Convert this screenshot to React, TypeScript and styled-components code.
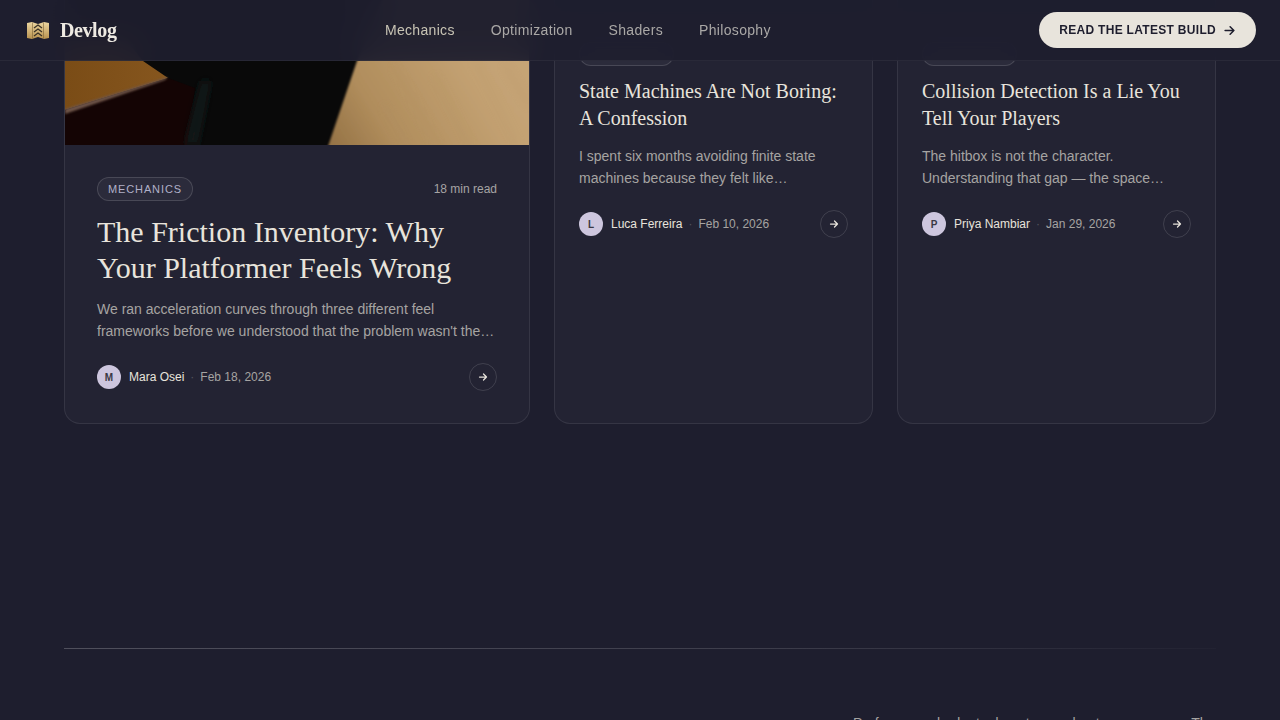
import React from "react";
import styled, { createGlobalStyle } from "styled-components";

const Global = createGlobalStyle`
  html, body { margin: 0; padding: 0; height: 720px; overflow: hidden; background: #1e1e2e; }
  * { box-sizing: border-box; }
`;
const Page = styled.div`
  height: 720px; overflow: hidden; position: relative; background: #1e1e2e;
  font-family: "Liberation Sans", Arial, sans-serif;
`;
const Header = styled.header`
  position: absolute; top: 0; left: 0; right: 0; z-index: 5; height: 61px;
  display: flex; justify-content: space-between; align-items: center; padding: 0 24px;
  background: rgba(30,30,46,.93); backdrop-filter: blur(14px);
  border-bottom: 1px solid rgba(255,255,255,.05);
`;
const Brand = styled.div`display: flex; align-items: center; gap: 11px; padding-left: 3px;`;
const BrandName = styled.span`
  font-family: "Liberation Serif", serif; font-weight: 700; font-size: 20px; letter-spacing: -.4px; color: #eeeae2;
`;
const Nav = styled.nav`display: flex; gap: 36px;`;
const NavLink = styled.a<{ $active?: boolean }>`
  font-size: 14px; letter-spacing: .33px; color: ${p => (p.$active ? "#c8c4b4" : "#aaa8a6")};
`;
const Cta = styled.button`
  height: 36px; padding: 0 19px 0 20px; border: 0; border-radius: 18px; background: #e8e4dc; color: #1e1e2e;
  font: 700 12px "Liberation Sans", sans-serif; letter-spacing: .3px; text-transform: uppercase;
  display: flex; align-items: center; gap: 6px;
`;
const Main = styled.main`padding: 0 64px; margin-top: -135px;`;
const Grid = styled.section`display: grid; grid-template-columns: 466px 319px 319px; gap: 24px;`;
const Card = styled.article`
  background-color: #232333; border: 1px solid rgba(255,255,255,.085); border-radius: 16px;
  overflow: hidden; height: 559px;
`;
const ImageBox = styled.div<{ $h: number }>`height: ${p => p.$h}px; svg { display: block; width: 100%; height: 100%; }`;
const SideImage = styled.div<{ $spot: string }>`
  height: 152px; background: radial-gradient(70px 60px at ${p => p.$spot} 20%, #5a6478, #161c2c 100%);
`;
const Body = styled.div<{ $p: number }>`padding: ${p => p.$p}px;`;
const TopRow = styled.div`display: flex; align-items: center; justify-content: space-between;`;
const Pill = styled.span<{ $w?: number }>`
  height: 24px; display: inline-flex; align-items: center; padding: 0 10px; border-radius: 12px;
  border: 1px solid rgba(255,255,255,.14); background: rgba(255,255,255,.04);
  ${p => (p.$w ? `width: ${p.$w}px;` : "")}
  font-size: 11px; letter-spacing: .88px; color: #b0b0c8; text-transform: uppercase;
`;
const ReadTime = styled.span`font-size: 12px; color: #a6a4a4;`;
const Title = styled.h2<{ $large?: boolean }>`
  margin: ${p => (p.$large ? "13px 0 12px" : "12px 0 13px")};
  font-family: "Liberation Serif", serif; font-weight: 400; color: #e8e4dc;
  font-size: ${p => (p.$large ? "30px" : "20px")}; line-height: ${p => (p.$large ? "36px" : "27px")};
`;
const Excerpt = styled.p`margin: 0; font-size: 14px; line-height: 22px; color: #a6a4a2;`;
const Foot = styled.div`display: flex; align-items: center; margin-top: 21px; height: 28px;`;
const Avatar = styled.span`
  width: 24px; height: 24px; border-radius: 50%; background: #cdc6de; color: #3a3844; margin-right: 8px;
  display: flex; align-items: center; justify-content: center; font-size: 10px; font-weight: 700;
`;
const Author = styled.span`font-size: 12px; color: #e8e4dc;`;
const Dot = styled.span`font-size: 12px; color: #55555f; margin: 0 6px;`;
const DateText = styled.span`font-size: 12px; color: #a6a4a2;`;
const ArrowBtn = styled.span`
  margin-left: auto; width: 28px; height: 28px; border-radius: 50%; border: 1px solid rgba(255,255,255,.13);
  display: flex; align-items: center; justify-content: center; color: #e8e4dc;
`;
const Rule = styled.hr`
  margin: 224px 0 0; border: 0; height: 1px;
  background: linear-gradient(90deg, rgba(255,255,255,.22), rgba(255,255,255,.14) 60%, rgba(255,255,255,.02));
`;
const FootRow = styled.div`display: flex; justify-content: flex-end; margin-top: 63px;`;
const FooterText = styled.p`margin: 0; width: 363px; font-size: 14px; line-height: 22px; color: #a6a4a2;`;

const Arrow = ({ size }: { size: number }) => (
  <svg width={size} height={size} viewBox="0 0 24 24" fill="none" stroke="currentColor" strokeWidth="2.5" strokeLinecap="round" strokeLinejoin="round">
    <path d="M5 12h14M13 6l6 6-6 6" />
  </svg>
);

const Logo = () => (
  <svg width="22" height="17" viewBox="0 0 22 17">
    <defs>
      <linearGradient id="lg" x1="0" y1="0" x2="0" y2="1">
        <stop offset="0" stopColor="#ecd6a0" /><stop offset="1" stopColor="#b8924f" />
      </linearGradient>
    </defs>
    <path d="M0 1 5 0l6 2 6-2 5 1v15l-5 1-6-2-6 2-5-1z" fill="url(#lg)" />
    <path d="M5.5 0.5v16M16.5 0.5v16" stroke="#7a6238" strokeWidth=".6" />
    <path d="M7 6 11 3l4 3M7 10l4-3 4 3M7 14l4-3 4 3" fill="none" stroke="#3a3226" strokeWidth="1.3" />
  </svg>
);

const Photo = () => (
  <svg viewBox="0 0 464 279" preserveAspectRatio="none">
    <defs>
      <linearGradient id="wood" x1="0" y1="1" x2="1" y2="0.2">
        <stop offset="0" stopColor="#8e6c40" /><stop offset=".22" stopColor="#b08d5c" /><stop offset=".55" stopColor="#c4a273" /><stop offset="1" stopColor="#caa97c" />
      </linearGradient>
      <linearGradient id="brown" x1="0" y1="0" x2="1" y2="0">
        <stop offset="0" stopColor="#7a4c16" /><stop offset="1" stopColor="#86561e" />
      </linearGradient>
      <linearGradient id="shade" x1="0" y1="0" x2="0" y2="1">
        <stop offset="0" stopColor="#15151c" stopOpacity=".75" /><stop offset=".92" stopColor="#15151c" stopOpacity=".6" /><stop offset="1" stopColor="#15151c" stopOpacity="0" />
      </linearGradient>
      <filter id="soft"><feGaussianBlur stdDeviation="1" /></filter>
      <filter id="soft4"><feGaussianBlur stdDeviation="4" /></filter>
    </defs>
    <rect width="464" height="279" fill="#090909" />
    <rect x="150" y="0" width="90" height="100" fill="#2c2c32" filter="url(#soft4)" />
    <path d="M0 175H62L78 195 103 212 0 244z" fill="url(#brown)" />
    <path d="M0 244 103 212 130 222 122 279H0z" fill="#140404" />
    <path d="M0 243 103 211 100 214 0 248z" fill="#6e5548" filter="url(#soft)" />
    <path d="M137 215H145L132 279H121z" fill="#121c1a" filter="url(#soft4)" />
    <path d="M292 195 258 295H490V0H372z" fill="url(#wood)" filter="url(#soft)" />
    <g stroke="#a88a60" strokeWidth="3" opacity=".25" filter="url(#soft4)">
      <path d="M330 200 372 279M370 210 405 279M410 196 452 279M320 240 340 279M440 200 464 240" />
    </g>
    <rect x="280" y="0" width="184" height="194" fill="url(#shade)" />
  </svg>
);

type SideProps = { spot: string; pillW: number; title: string[]; excerpt: string[]; initial: string; author: string; date: string };
const Side = ({ spot, pillW, title, excerpt, initial, author, date }: SideProps) => (
  <Card>
    <SideImage $spot={spot} />
    <Body $p={24}>
      <TopRow><Pill $w={pillW}>&nbsp;</Pill></TopRow>
      <Title>{title[0]}<br />{title[1]}</Title>
      <Excerpt>{excerpt[0]}<br />{excerpt[1]}</Excerpt>
      <Foot>
        <Avatar>{initial}</Avatar><Author>{author}</Author><Dot>·</Dot><DateText>{date}</DateText>
        <ArrowBtn><Arrow size={12} /></ArrowBtn>
      </Foot>
    </Body>
  </Card>
);

export default function App() {
  return (
    <Page>
      <Global />
      <Header>
        <Brand><Logo /><BrandName>Devlog</BrandName></Brand>
        <Nav>
          <NavLink $active>Mechanics</NavLink><NavLink>Optimization</NavLink><NavLink>Shaders</NavLink><NavLink>Philosophy</NavLink>
        </Nav>
        <Cta>Read the latest build <Arrow size={15} /></Cta>
      </Header>
      <Main>
        <Grid>
          <Card>
            <ImageBox $h={279}><Photo /></ImageBox>
            <Body $p={32}>
              <TopRow><Pill>Mechanics</Pill><ReadTime>18 min read</ReadTime></TopRow>
              <Title $large>The Friction Inventory: Why<br />Your Platformer Feels Wrong</Title>
              <Excerpt>We ran acceleration curves through three different feel<br />frameworks before we understood that the problem wasn't the…</Excerpt>
              <Foot>
                <Avatar>M</Avatar><Author>Mara Osei</Author><Dot>·</Dot><DateText>Feb 18, 2026</DateText>
                <ArrowBtn><Arrow size={12} /></ArrowBtn>
              </Foot>
            </Body>
          </Card>
          <Side spot="75%" pillW={95} title={["State Machines Are Not Boring:", "A Confession"]} excerpt={["I spent six months avoiding finite state", "machines because they felt like…"]} initial="L" author="Luca Ferreira" date="Feb 10, 2026" />
          <Side spot="20%" pillW={95} title={["Collision Detection Is a Lie You", "Tell Your Players"]} excerpt={["The hitbox is not the character.", "Understanding that gap — the space…"]} initial="P" author="Priya Nambiar" date="Jan 29, 2026" />
        </Grid>
        <Rule />
        <FootRow><FooterText>Performance budgets do not care about your process. The</FooterText></FootRow>
      </Main>
    </Page>
  );
}
